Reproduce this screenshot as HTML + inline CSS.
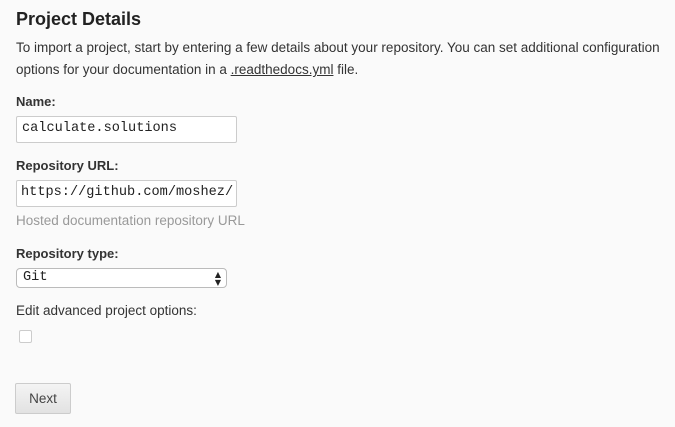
<!DOCTYPE html><html><head><style>
body{margin:0;width:675px;height:427px;background:#fafafa;font-family:"Liberation Sans",sans-serif;color:#333;position:relative;overflow:hidden}
.a{position:absolute;white-space:nowrap}
h1{position:absolute;left:16px;top:9px;margin:0;font-size:18px;font-weight:bold;color:#222}
.p{font-size:13.5px;color:#333}
.l{font-size:13px;font-weight:bold;color:#333}
.in{position:absolute;background:#fff;border:1px solid #ccc;border-radius:2px;font-family:"Liberation Mono",monospace;font-size:13.6px;color:#222;box-sizing:border-box;padding-left:5px;line-height:24px}
</style></head><body>
<h1>Project Details</h1>
<div class="a p" style="left:16px;top:40px">To import a project, start by entering a few details about your repository. You can set additional configuration</div>
<div class="a p" style="left:16px;top:62px">options for your documentation in a <u>.readthedocs.yml</u> file.</div>
<div class="a l" style="left:16px;top:94px">Name:</div>
<div class="in" style="left:16px;top:116px;width:221px;height:27px">calculate.solutions</div>
<div class="a l" style="left:16px;top:158px">Repository URL:</div>
<div class="in" style="left:16px;top:180px;width:221px;height:27px;overflow:hidden;padding-left:4px">https://github.com/moshez/</div>
<div class="a p" style="left:16px;top:213px;color:#999">Hosted documentation repository URL</div>
<div class="a l" style="left:16px;top:246px">Repository type:</div>
<div class="in" style="left:16px;top:268px;width:211px;height:20px;line-height:18px;border-radius:4px;border-color:#bbb;padding-left:6px">Git<span style="position:absolute;right:5px;font-size:8px;line-height:8px;top:2px;font-family:'DejaVu Sans'">▲<br>▼</span></div>
<div class="a p" style="left:16px;top:303px">Edit advanced project options:</div>
<div class="a" style="left:19px;top:330px;width:11px;height:11px;border:1px solid #ccc;border-radius:2px;background:#fff"></div>
<div class="a" style="left:15px;top:383px;width:56px;height:31px;box-sizing:border-box;border:1px solid #ccc;border-radius:2px;background:linear-gradient(#f4f4f4,#e2e2e2);font-size:13.5px;color:#444;text-align:center;line-height:29px">Next</div>
</body></html>
